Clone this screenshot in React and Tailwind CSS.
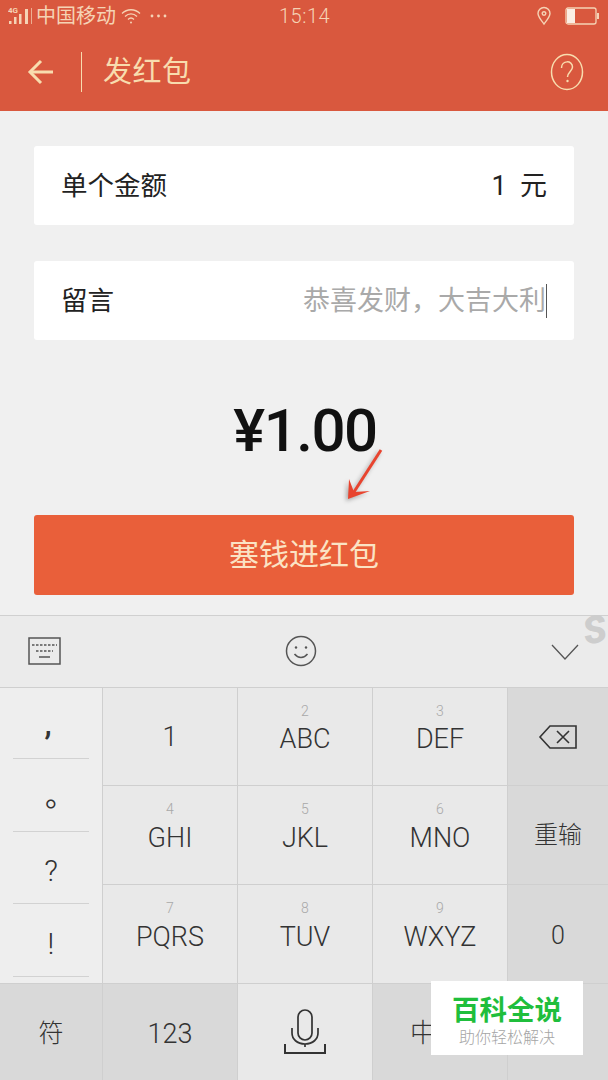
import React from "react";

const cjk = "font-['Roboto','Noto_Sans_CJK_SC',sans-serif]";

const Key = ({ num, label, dark, className = "" }) => (
  <div className={`relative flex items-center justify-center border-l border-[#cfcfcf] ${dark ? "bg-[#d9d9d9]" : "bg-[#e9e9e9]"} ${className}`}>
    {num && <span className="absolute top-[14px] left-0 right-0 text-center text-[14px] leading-[18px] font-light text-[#a8a8a8]">{num}</span>}
    {label && <span className={`text-[#333] font-light text-[27px] leading-[32px] ${num ? "mt-[5px]" : ""}`}>{label}</span>}
  </div>
);

const SymbolRow = ({ children, className = "" }) => (
  <div className={`h-[72.5px] mx-[13px] flex items-center justify-center border-b border-[#d2d2d2] text-[30px] text-[#333] ${className}`}>
    {children}
  </div>
);

export default function App() {
  return (
    <div className={`relative w-[608px] h-[1080px] overflow-hidden bg-[#f0f0f0] ${cjk}`}>
      {/* 顶部 */}
      <div className="h-[111px] bg-[#d9583e] text-[#f8dcae]">
        <div className="h-[32px] relative flex items-center pl-[8px] pr-[8px] text-[#f5d3b5]">
          <svg width="24" height="20" viewBox="0 0 24 20" fill="#f5d3b5">
            <text x="0" y="7" fontSize="8" fontFamily="Roboto" fontWeight="700">4G</text>
            <rect x="1" y="15" width="2.5" height="3" />
            <rect x="6" y="11" width="2.5" height="7" />
            <rect x="11" y="8" width="2.5" height="10" />
            <rect x="17" y="3" width="3" height="15" />
            <rect x="23" y="2" width="1" height="16" opacity=".7" />
          </svg>
          <span className="ml-[4px] text-[20px] leading-[24px]">中国移动</span>
          <svg className="ml-[5px]" width="20" height="18" viewBox="0 0 20 18" fill="none" stroke="#f5d3b5" strokeWidth="1.3">
            <path d="M1 6.5C6 1.5 14 1.5 19 6.5" />
            <path d="M4 9.5C7.5 6 12.5 6 16 9.5" />
            <path d="M7 12.5C8.8 10.7 11.2 10.7 13 12.5" />
            <circle cx="10" cy="15.5" r="1" fill="#f5d3b5" stroke="none" />
          </svg>
          <svg className="ml-[8px]" width="20" height="6" viewBox="0 0 20 6" fill="#f5d3b5">
            <circle cx="3" cy="3" r="1.4" />
            <circle cx="9.5" cy="3" r="1.4" />
            <circle cx="16" cy="3" r="1.4" />
          </svg>
          <span className="absolute left-[279px] top-[3px] text-[20px] leading-[26px] font-light tracking-[0.5px]">15:14</span>
          <svg className="ml-auto" width="16" height="20" viewBox="0 0 16 20" fill="none" stroke="#f5d3b5" strokeWidth="1.4">
            <path d="M8 18C4.5 13.5 2 10.5 2 7.5a6 6 0 0 1 12 0C14 10.5 11.5 13.5 8 18Z" />
            <circle cx="8" cy="7.5" r="1.8" />
          </svg>
          <svg className="ml-[13px]" width="35" height="18" viewBox="0 0 35 18" fill="none">
            <rect x="1" y="1" width="30" height="16" rx="2" stroke="#f5d3b5" strokeWidth="1.3" />
            <rect x="2" y="2" width="8" height="14" fill="#fbeee4" />
            <rect x="32" y="6" width="2" height="6" fill="#f5d3b5" />
          </svg>
        </div>
        <div className="h-[79px] flex items-center">
          <svg className="ml-[27px]" width="27" height="26" viewBox="0 0 27 26" fill="none" stroke="#f8dcae" strokeWidth="3">
            <path d="M26 13H3" />
            <path d="M14 2 3 13l11 11" />
          </svg>
          <div className="ml-[27px] w-[1px] h-[40px] bg-[#f8dcae]" />
          <span className="ml-[21px] text-[29px] leading-[38px] tracking-[0.5px]">发红包</span>
          <svg className="ml-auto mr-[24px]" width="34" height="38" viewBox="0 0 34 38" fill="none" stroke="#f8dcae" strokeWidth="1.5">
            <ellipse cx="17" cy="19" rx="15.5" ry="17.5" />
            <path d="M11.5 15c0-8 11-8 11-1 0 4-5 5-5 10" />
            <circle cx="17.5" cy="28" r="1.2" fill="#f8dcae" stroke="none" />
          </svg>
        </div>
      </div>

      {/* 表单 */}
      <div className="h-[505px] px-[34px] pt-[35px] border-b border-[#d0d0d0]">
        <div className="h-[79px] bg-white rounded-[3px] flex items-center justify-between pl-[27px] pr-[27px] text-[#222]">
          <span className="text-[26.5px] leading-[34px]">单个金额</span>
          <span className="text-[27px] leading-[34px]">1&nbsp;&nbsp;元</span>
        </div>
        <div className="mt-[36px] h-[79px] bg-white rounded-[3px] flex items-center justify-between pl-[27px] pr-[27px]">
          <span className="text-[26.5px] leading-[34px] text-[#222]">留言</span>
          <span className="flex items-center text-[27px] leading-[34px] text-[#a9a9a9]">
            恭喜发财，大吉大利
            <span className="w-[1px] h-[34px] bg-[#555]" />
          </span>
        </div>
        <div className="mt-[53px] h-[76px] flex items-center justify-center text-[60px] leading-[76px] font-medium tracking-[-1.5px] text-[#111]">
          <span className="ml-[2px]">¥1.00</span>
        </div>
        <div className="mt-[46px] h-[80px] bg-[#e95f3a] rounded-[3px] flex items-center justify-center text-[30px] leading-[36px] text-[#fbe3c4]">
          塞钱进红包
        </div>
      </div>

      {/* 键盘工具栏 */}
      <div className="h-[72px] bg-[#ebebeb] flex items-center justify-between pl-[28px] pr-[29px] border-b border-[#cfcfcf]">
        <svg className="-mt-[2px]" width="33" height="28" viewBox="0 0 33 28" fill="none" stroke="#555">
          <rect x="1" y="1" width="31" height="26" strokeWidth="1.5" />
          <path d="M4 8h25M8 14h17" strokeWidth="1.5" strokeDasharray="2.5 1.5" />
          <path d="M11 20h11" strokeWidth="1.5" />
        </svg>
        <svg className="mr-[10px] -mt-[2px]" width="32" height="32" viewBox="0 0 32 32" fill="none" stroke="#555" strokeWidth="1.5">
          <circle cx="16" cy="16" r="14.5" />
          <circle cx="11" cy="12.5" r="1.2" fill="#555" stroke="none" />
          <circle cx="21" cy="12.5" r="1.2" fill="#555" stroke="none" />
          <path d="M9.5 19c3.5 4.5 9.5 4.5 13 0" />
        </svg>
        <svg width="28" height="16" viewBox="0 0 28 16" fill="none" stroke="#555" strokeWidth="1.3">
          <path d="M1 1l13 14L27 1" />
        </svg>
      </div>

      {/* 键盘 */}
      <div className="grid grid-cols-[102px_135px_135px_135px_101px] grid-rows-[98px_99px_99px_96px] text-[#333]">
        <div className="row-span-3 bg-[#eeeeee] border-b border-[#cfcfcf]">
          <div className="h-[71px] mx-[13px] flex items-center justify-center border-b border-[#d2d2d2] text-[32px] font-medium text-[#333]">
            <span className="-ml-[6px] mt-[2px]">,</span>
          </div>
          <SymbolRow className="pl-[18px] pt-[2px]">。</SymbolRow>
          <SymbolRow className="pt-[6px] font-light">?</SymbolRow>
          <SymbolRow className="pt-[8px] font-light">!</SymbolRow>
        </div>
        <Key label="1" className="border-b" />
        <Key num="2" label="ABC" className="border-b" />
        <Key num="3" label="DEF" className="border-b" />
        <div className="flex items-center justify-center bg-[#d9d9d9] border-l border-b border-[#cfcfcf]">
          <svg width="40" height="26" viewBox="0 0 40 26" fill="none" stroke="#333" strokeWidth="1.6">
            <path d="M12 2h26v22H12L2 13Z" />
            <path d="M19 7l12 12M31 7 19 19" />
          </svg>
        </div>
        <Key num="4" label="GHI" className="border-b" />
        <Key num="5" label="JKL" className="border-b" />
        <Key num="6" label="MNO" className="border-b" />
        <div className="flex items-center justify-center bg-[#d9d9d9] border-l border-b border-[#cfcfcf] text-[24px] font-light">重输</div>
        <Key num="7" label="PQRS" className="border-b" />
        <Key num="8" label="TUV" className="border-b" />
        <Key num="9" label="WXYZ" className="border-b" />
        <div className="flex items-center justify-center bg-[#d9d9d9] border-l border-b border-[#cfcfcf] text-[25px] font-light pt-[3px]">0</div>
        <div className="flex items-center justify-center bg-[#d9d9d9] text-[25px] font-light pt-[4px]">符</div>
        <Key label="123" dark className="pt-[4px]" />
        <div className="flex items-center justify-center bg-[#e9e9e9] border-l border-[#cfcfcf]">
          <svg width="42" height="46" viewBox="0 0 42 46" fill="none" stroke="#333" strokeWidth="1.7">
            <rect x="14" y="1" width="14" height="30" rx="7" />
            <path d="M8 19v5c0 6 5 11 13 11s13-5 13-11v-5" />
            <path d="M21 35v3" />
            <path d="M1 35v9h40v-9" strokeWidth="2" />
          </svg>
        </div>
        <div className="flex items-center justify-center bg-[#d9d9d9] border-l border-[#cfcfcf] text-[26px] font-light pr-[34px] pt-[2px]">中</div>
        <div className="bg-[#d9d9d9] border-l border-[#cfcfcf]" />
      </div>

      {/* 箭头 */}
      <svg className="absolute left-[340px] top-[444px] drop-shadow-[-2px_2px_2px_rgba(0,0,0,0.3)]" width="50" height="60" viewBox="0 0 50 60" fill="none">
        <path d="M41 6 12 51" stroke="#e8442f" strokeWidth="3" />
        <path d="M8 55 9 35l5 13 16-1Z" fill="#e8442f" />
      </svg>

      {/* 水印 */}
      <div className="absolute left-[431px] top-[981px] w-[152px] h-[74px] bg-white flex flex-col items-center">
        <span className="mt-[14px] text-[27.5px] leading-[32px] font-bold text-[#1fbe3c]">百科全说</span>
        <span className="mt-[1px] text-[16px] leading-[20px] font-light text-[#a5a5a5]">助你轻松解决</span>
      </div>
      <span className="absolute left-[583px] top-[608px] -rotate-12 text-[38px] leading-[44px] font-black italic text-[#cdcdcd]">S</span>
    </div>
  );
}
